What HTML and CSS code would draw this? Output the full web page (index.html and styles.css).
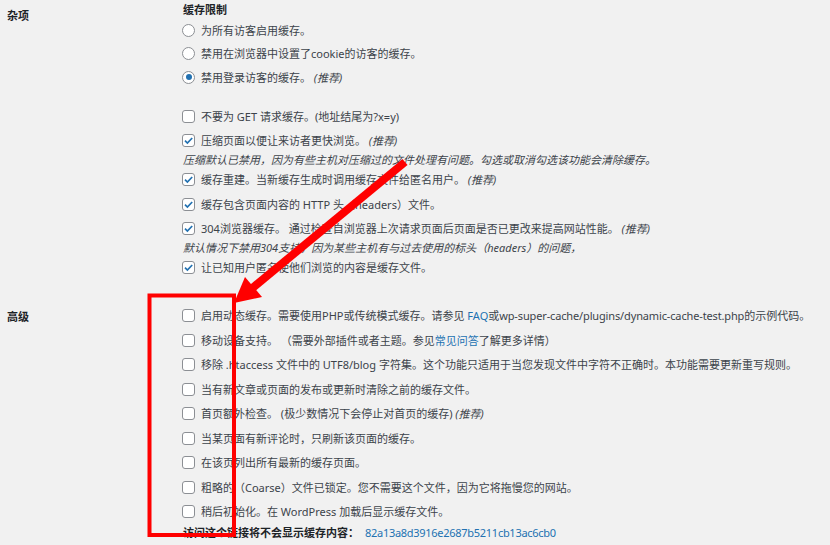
FILE: index.html
```html
<!DOCTYPE html>
<html lang="zh-CN">
<head>
<meta charset="utf-8">
<title>WP Super Cache 高级设置</title>
<link rel="stylesheet" href="styles.css">
</head>
<body>
<div class="page">

  <section class="section misc">
    <div class="section-label">杂项</div>
    <div class="section-body">
      <div class="legend">缓存限制</div>
      <div class="group radios">
        <label class="opt"><span class="radio"></span><span>为所有访客启用缓存。</span></label>
        <label class="opt"><span class="radio"></span><span>禁用在浏览器中设置了cookie的访客的缓存。</span></label>
        <label class="opt"><span class="radio on"></span><span>禁用登录访客的缓存。 <em>(推荐)</em></span></label>
      </div>
      <div class="group checks">
        <label class="opt"><span class="box"></span><span>不要为 GET 请求缓存。(地址结尾为?x=y)</span></label>
        <label class="opt"><span class="box on"><svg viewBox="0 0 13 13"><path d="M3 6.6l2.4 2.4 4.8-5"/></svg></span><span>压缩页面以便让来访者更快浏览。 <em>(推荐)</em></span></label>
        <p class="note">压缩默认已禁用，因为有些主机对压缩过的文件处理有问题。勾选或取消勾选该功能会清除缓存。</p>
        <label class="opt"><span class="box on"><svg viewBox="0 0 13 13"><path d="M3 6.6l2.4 2.4 4.8-5"/></svg></span><span>缓存重建。当新缓存生成时调用缓存文件给匿名用户。 <em>(推荐)</em></span></label>
        <label class="opt"><span class="box on"><svg viewBox="0 0 13 13"><path d="M3 6.6l2.4 2.4 4.8-5"/></svg></span><span>缓存包含页面内容的 HTTP 头（headers）文件。</span></label>
        <label class="opt"><span class="box on"><svg viewBox="0 0 13 13"><path d="M3 6.6l2.4 2.4 4.8-5"/></svg></span><span>304浏览器缓存。 通过检查自浏览器上次请求页面后页面是否已更改来提高网站性能。 <em>(推荐)</em></span></label>
        <p class="note">默认情况下禁用304支持，因为某些主机有与过去使用的标头（headers）的问题，</p>
        <label class="opt"><span class="box on"><svg viewBox="0 0 13 13"><path d="M3 6.6l2.4 2.4 4.8-5"/></svg></span><span>让已知用户匿名使他们浏览的内容是缓存文件。</span></label>
      </div>
    </div>
  </section>

  <section class="section advanced">
    <div class="section-label">高级</div>
    <div class="section-body">
      <div class="group checks">
        <label class="opt"><span class="box"></span><span>启用动态缓存。需要使用PHP或传统模式缓存。请参见 <a href="#">FAQ</a>或<span class="path">wp-super-cache/plugins/dynamic-cache-test.php</span>的示例代码。</span></label>
        <label class="opt"><span class="box"></span><span>移动设备支持。 （需要外部插件或者主题。参见<a href="#">常见问答</a>了解更多详情）</span></label>
        <label class="opt"><span class="box"></span><span>移除 .htaccess 文件中的 UTF8/blog 字符集。这个功能只适用于当您发现文件中字符不正确时。本功能需要更新重写规则。</span></label>
        <label class="opt"><span class="box"></span><span>当有新文章或页面的发布或更新时清除之前的缓存文件。</span></label>
        <label class="opt"><span class="box"></span><span>首页额外检查。 (极少数情况下会停止对首页的缓存) <em>(推荐)</em></span></label>
        <label class="opt"><span class="box"></span><span>当某页面有新评论时，只刷新该页面的缓存。</span></label>
        <label class="opt"><span class="box"></span><span>在该页列出所有最新的缓存页面。</span></label>
        <label class="opt"><span class="box"></span><span>粗略的（Coarse）文件已锁定。您不需要这个文件，因为它将拖慢您的网站。</span></label>
        <label class="opt"><span class="box"></span><span>稍后初始化。在 WordPress 加载后显示缓存文件。</span></label>
      </div>
      <p class="secret"><strong>访问这个链接将不会显示缓存内容：</strong><a class="hash" href="#">82a13a8d3916e2687b5211cb13ac6cb0</a></p>
    </div>
  </section>

  <!-- annotation layer: highlight box and pointer arrow -->
  <svg class="markup" width="830" height="545" viewBox="0 0 830 545">
    <rect x="149.5" y="295.5" width="84.5" height="239.5" fill="none" stroke="#f00" stroke-width="4"/>
    <line x1="405" y1="162" x2="250" y2="290" stroke="#f00" stroke-width="8"/>
    <polygon points="234,303 245,277 262,297" fill="#f00"/>
  </svg>
</div>
</body>
</html>
```

FILE: styles.css
```css
* { box-sizing: border-box; }

body {
  margin: 0;
  background: #f1f1f1;
  font-family: "Noto Sans", "Noto Sans CJK SC", sans-serif;
  font-size: 11px;
  color: #3c434a;
}

.page {
  position: relative;
  width: 830px;
  height: 545px;
  overflow: hidden;
}

.section {
  display: grid;
  grid-template-columns: 176px 1fr;
  padding-left: 7px;
}

.section-label {
  font-weight: 700;
  color: #1d2327;
  line-height: 19px;
}

.misc .section-label { margin-top: 6px; }

.advanced { margin-top: 29px; }
.advanced .section-label { margin-top: 1px; }

.legend {
  font-weight: 700;
  color: #1d2327;
  line-height: 19px;
  height: 19px;
}

.group {
  display: flex;
  flex-direction: column;
}

.radios { margin-top: 1.5px; }
.radios .opt + .opt { margin-top: 4.5px; }

.misc .checks { margin-top: 20px; }

.opt {
  display: flex;
  align-items: center;
  height: 19px;
  line-height: 19px;
  white-space: nowrap;
}

.opt + .opt { margin-top: 5.5px; }

.opt em,
.note { font-style: italic; }

.note {
  margin: 0;
  height: 20px;
  line-height: 20px;
  white-space: nowrap;
}

.radio,
.box {
  flex: none;
  width: 13px;
  height: 13px;
  margin: 0 6px 0 -1px;
  background: #fff;
  border: 1px solid #8c8f94;
  position: relative;
}

.radio { border-radius: 50%; }
.box { border-radius: 3px; }

.radio.on::after {
  content: "";
  position: absolute;
  left: 2.5px;
  top: 2.5px;
  width: 6px;
  height: 6px;
  border-radius: 50%;
  background: #2271b1;
}

.box svg {
  position: absolute;
  left: -1px;
  top: -1px;
  width: 13px;
  height: 13px;
}

.box path {
  fill: none;
  stroke: #2271b1;
  stroke-width: 1.7;
}

a {
  color: #2271b1;
  text-decoration: none;
}

/* long latin runs are set a touch tighter */
.path { letter-spacing: -0.14px; }
.hash { letter-spacing: -0.28px; }

.secret {
  margin: 1.5px 0 0;
  line-height: 19px;
  white-space: nowrap;
}

.secret strong {
  color: #1d2327;
  margin-right: 6px;
}

.markup {
  position: absolute;
  left: 0;
  top: 0;
  pointer-events: none;
}
```
